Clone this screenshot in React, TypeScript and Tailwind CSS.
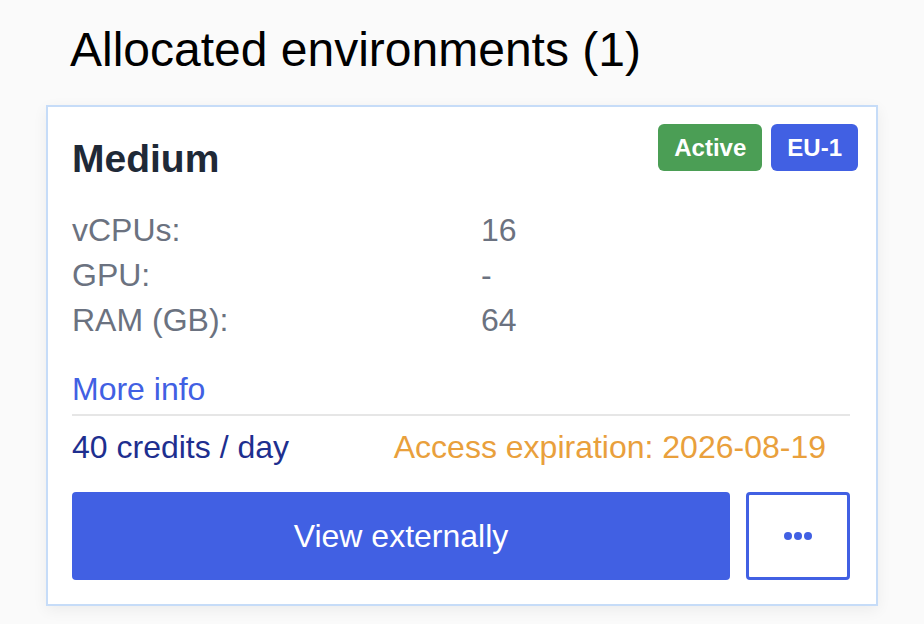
type Spec = { label: string; value: string };

const specs: Spec[] = [
  { label: 'vCPUs:', value: '16' },
  { label: 'GPU:', value: '-' },
  { label: 'RAM (GB):', value: '64' },
];

function EnvironmentCard() {
  return (
    <div className="relative mx-[46px] border-2 border-[#c6dcf8] bg-white pt-[26px] pr-[26px] pb-[24px] pl-[24px] shadow-[0_4px_14px_rgba(0,0,0,0.06)]">
      {/* Status + region badges */}
      <div className="absolute top-[17px] right-[18px] flex gap-[9px]">
        <span className="h-[47px] rounded-[6px] bg-[#4b9e55] px-[16px] text-[24px] leading-[47px] font-bold text-white">
          Active
        </span>
        <span className="h-[47px] rounded-[6px] bg-[#4160e3] px-[16px] text-[24px] leading-[47px] font-bold text-white">
          EU-1
        </span>
      </div>

      <h2 className="text-[39px] leading-[52px] font-bold text-[#1f2937]">Medium</h2>

      <div className="mt-[23px] grid grid-cols-[409px_1fr] text-[32px] leading-[45px] text-[#6b7280]">
        {specs.map((s) => (
          <div key={s.label} className="contents">
            <span>{s.label}</span>
            <span>{s.value}</span>
          </div>
        ))}
      </div>

      <div className="mt-[24px] text-[32px] leading-[45px] text-[#4160e3]">More info</div>

      <div className="mt-[2px] h-[2px] bg-[#e6e6e6]" />

      <div className="mt-[9px] flex items-center justify-between pr-[24px] text-[32px] leading-[45px]">
        <span className="text-[#1e2f8f]">40 credits / day</span>
        <span className="text-[#e9a03c]">Access expiration: 2026-08-19</span>
      </div>

      <div className="mt-[22px] flex gap-[16px]">
        <button className="h-[88px] flex-1 rounded-[4px] bg-[#4160e3] text-[32px] text-white">
          View externally
        </button>
        <button className="flex h-[88px] w-[104px] items-center justify-center gap-[2px] rounded-[4px] border-[3px] border-[#4160e3] bg-white">
          <span className="h-[8px] w-[8px] rounded-full bg-[#4160e3]" />
          <span className="h-[8px] w-[8px] rounded-full bg-[#4160e3]" />
          <span className="h-[8px] w-[8px] rounded-full bg-[#4160e3]" />
        </button>
      </div>
    </div>
  );
}

export default function App() {
  return (
    <div className="min-h-[624px] bg-[#fafafa] pt-[22px] font-['Liberation_Sans',Arial,sans-serif]">
      <h1 className="mb-[28px] ml-[70px] text-[48px] leading-[55px] text-black">
        Allocated environments (1)
      </h1>
      <EnvironmentCard />
    </div>
  );
}
